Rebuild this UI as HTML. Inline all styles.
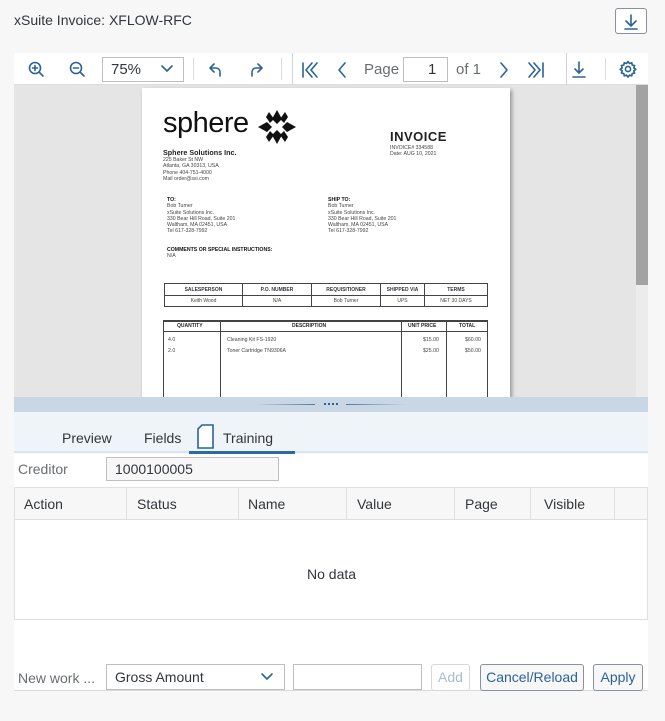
<!DOCTYPE html>
<html><head><meta charset="utf-8">
<style>
*{box-sizing:border-box;margin:0;padding:0}
body{width:665px;height:721px;background:#f7f7f7;font-family:"Liberation Sans",sans-serif;color:#32363a;position:relative;overflow:hidden}
.a{position:absolute}
.t{font-size:14px}
.ic{position:absolute;stroke:#2b6397;fill:none;stroke-width:1.6;stroke-linecap:round;stroke-linejoin:round}
.pg{font-family:"Liberation Sans",sans-serif;color:#222;position:absolute;white-space:nowrap}
.btn{position:absolute;border:1px solid #89919a;border-radius:3px;background:#f7f7f7;color:#2b6397;font-size:14px;text-align:center;line-height:25px;height:27px}
table.inv{border-collapse:collapse;position:absolute;font-size:5px}
table.inv td{border:1px solid #444;text-align:center;padding:0}
.sm{font-size:5.2px;line-height:6.3px;color:#444}
</style></head><body>
<div class="a t" style="left:14px;top:12px;color:#32363a">xSuite Invoice: XFLOW-RFC</div>
<div class="a" style="left:615px;top:8px;width:32px;height:26px;border:1px solid #89919a;border-radius:3px;background:#fff"></div>
<svg class="ic" style="left:615px;top:8px" width="32" height="26"><path d="M16 7v11M11 13l5 5 5-5M10 21h12"/></svg>

<!-- toolbar -->
<div class="a" style="left:14px;top:53px;width:634px;height:32px;background:#fff;border-bottom:1px solid #ddd"></div>
<svg class="ic" style="left:27px;top:60px" width="20" height="20" stroke-width="1.3"><circle cx="8" cy="8" r="5.5"/><path d="M12 12l4 4M5.5 8h5M8 5.5v5"/></svg>
<svg class="ic" style="left:68px;top:60px" width="20" height="20" stroke-width="1.3"><circle cx="8" cy="8" r="5.5"/><path d="M12 12l4 4M5.5 8h5"/></svg>
<div class="a" style="left:102px;top:57px;width:82px;height:25px;border:1px solid #bfbfbf"></div>
<div class="a t" style="left:111px;top:61px;font-size:15px">75%</div>
<svg class="ic" style="left:160px;top:64px" width="14" height="10" stroke-width="1"><path d="M2 2l5 5 5-5"/></svg>
<div class="a" style="left:193px;top:58px;width:1px;height:22px;background:#ddd"></div>
<svg class="ic" style="left:206px;top:60px" width="20" height="20" stroke-width="2"><path d="M8 4L4 8l4 4M4 8h6a4 4 0 0 1 4 4v4"/></svg>
<svg class="ic" style="left:246px;top:60px" width="20" height="20" stroke-width="2"><path d="M12 4l4 4-4 4M16 8h-6a4 4 0 0 0-4 4v4"/></svg>
<div class="a" style="left:281px;top:58px;width:1px;height:22px;background:#ddd"></div>
<div class="a" style="left:292px;top:53px;width:1px;height:32px;background:#c8d4e0"></div>
<svg class="ic" style="left:300px;top:60px" width="20" height="20" stroke-width="2"><path d="M3 3v14M12 3l-6 7 6 7M17 3l-6 7 6 7"/></svg>
<svg class="ic" style="left:335px;top:60px" width="14" height="20" stroke-width="2"><path d="M10 3l-6 7 6 7"/></svg>
<div class="a t" style="left:364px;top:61px;color:#6a6d70;font-size:15px">Page</div>
<div class="a" style="left:403px;top:57px;width:45px;height:25px;border:1px solid #bfbfbf;background:#fff"></div>
<div class="a t" style="left:428px;top:61px;font-size:15px">1</div>
<div class="a t" style="left:456px;top:61px;color:#6a6d70;font-size:15px">of 1</div>
<svg class="ic" style="left:497px;top:60px" width="14" height="20" stroke-width="2"><path d="M4 3l6 7-6 7"/></svg>
<svg class="ic" style="left:526px;top:60px" width="20" height="20" stroke-width="2"><path d="M3 3l6 7-6 7M8 3l6 7-6 7M17 3v14"/></svg>
<div class="a" style="left:566px;top:53px;width:1px;height:32px;background:#c8d4e0"></div>
<svg class="ic" style="left:569px;top:58px" width="20" height="22" stroke-width="1.3"><path d="M10 4v11M6 11l4 4 4-4M4 19h12"/></svg>
<div class="a" style="left:605px;top:58px;width:1px;height:22px;background:#ddd"></div>
<svg class="ic" style="left:618px;top:58px" width="20" height="22" stroke-width="1.2"><circle cx="10" cy="11" r="2.6"/><path d="M10 3.5l1.5 2 2.3-.8.4 2.4 2.4.4-.8 2.3 2 1.5-2 1.5.8 2.3-2.4.4-.4 2.4-2.3-.8-1.5 2-1.5-2-2.3.8-.4-2.4-2.4-.4.8-2.3-2-1.5 2-1.5-.8-2.3 2.4-.4.4-2.4 2.3.8z"/></svg>

<!-- viewer -->
<div class="a" style="left:14px;top:85px;width:634px;height:312px;background:#e5e5e5"></div>
<div class="a" style="left:636px;top:85px;width:12px;height:312px;background:#ececec"></div>
<div class="a" style="left:636px;top:85px;width:12px;height:200px;background:#a3a3a3"></div>
<div class="a" style="left:142px;top:88px;width:368px;height:309px;background:#fff;box-shadow:2px 2px 4px rgba(0,0,0,.35)"></div>

<div class="pg" style="left:163px;top:107px;font-size:29px;font-weight:300;letter-spacing:-.5px;color:#111">sphere</div>
<svg class="a" style="left:258px;top:110px" width="38" height="34"><g fill="#111"><path d="M19 0l5 9-5 5-5-5zM19 34l5-9-5-5-5 5zM0 17l9-5 5 5-5 5zM38 17l-9-5-5 5 5 5z"/><path d="M11 2l5 7-4 4-4-6zM27 2l-5 7 4 4 4-6zM11 32l5-7-4-4-4 6zM27 32l-5-7 4-4 4 6z"/></g></svg>
<div class="pg" style="left:163px;top:148px;font-size:7.2px;font-weight:bold">Sphere Solutions Inc.</div>
<div class="pg sm" style="left:163px;top:157px">225 Baker St NW<br>Atlanta, GA 30313, USA<br>Phone 404-751-4000<br>Mail order@ssi.com</div>
<div class="pg" style="left:390px;top:129px;font-size:13px;font-weight:bold;letter-spacing:.5px">INVOICE</div>
<div class="pg sm" style="left:390px;top:145px">INVOICE# 334588<br>Date: AUG 10, 2021</div>
<div class="pg sm" style="left:167px;top:197px"><b style="color:#111">TO:</b><br>Bob Turner<br>xSuite Solutions Inc.<br>330 Bear Hill Road, Suite 201<br>Waltham, MA 02451, USA<br>Tel 617-328-7992</div>
<div class="pg sm" style="left:328px;top:197px"><b style="color:#111">SHIP TO:</b><br>Bob Turner<br>xSuite Solutions Inc.<br>330 Bear Hill Road, Suite 201<br>Waltham, MA 02451, USA<br>Tel 617-328-7992</div>
<div class="pg sm" style="left:167px;top:247px"><b style="color:#111">COMMENTS OR SPECIAL INSTRUCTIONS:</b><br>N/A</div>
<table class="inv" style="left:164px;top:283px;width:324px">
<tr style="height:12px;font-weight:bold"><td style="width:78px">SALESPERSON</td><td style="width:69px">P.O. NUMBER</td><td style="width:69px">REQUISITIONER</td><td style="width:44px">SHIPPED VIA</td><td>TERMS</td></tr>
<tr style="height:11px;color:#444"><td>Keith Wood</td><td>N/A</td><td>Bob Turner</td><td>UPS</td><td>NET 30 DAYS</td></tr></table>
<div class="a" style="left:163px;top:320px;width:325px;height:80px;border:1px solid #444;border-top:2px solid #444"></div>
<div class="a" style="left:163px;top:331px;width:325px;height:1px;background:#444"></div>
<div class="a" style="left:220px;top:320px;width:1px;height:80px;background:#444"></div>
<div class="a" style="left:401px;top:320px;width:1px;height:80px;background:#444"></div>
<div class="a" style="left:446px;top:320px;width:1px;height:80px;background:#444"></div>
<div class="pg" style="left:177px;top:323px;font-size:5px;font-weight:bold">QUANTITY</div>
<div class="pg" style="left:292px;top:323px;font-size:5px;font-weight:bold">DESCRIPTION</div>
<div class="pg" style="left:408px;top:323px;font-size:5px;font-weight:bold">UNIT PRICE</div>
<div class="pg" style="left:459px;top:323px;font-size:5px;font-weight:bold">TOTAL</div>
<div class="pg sm" style="left:168px;top:335px;line-height:11px">4.0<br>2.0</div>
<div class="pg sm" style="left:227px;top:335px;line-height:11px">Cleaning Kit FS-1920<br>Toner Cartridge TN9306A</div>
<div class="pg sm" style="left:423px;top:335px;line-height:11px">$15.00<br>$25.00</div>
<div class="pg sm" style="left:465px;top:335px;line-height:11px">$60.00<br>$50.00</div>

<!-- splitter -->
<div class="a" style="left:14px;top:397px;width:634px;height:15px;background:#c9d7e5"></div>
<div class="a" style="left:255px;top:404px;width:60px;height:1px;background:linear-gradient(90deg,transparent,#4a7aab)"></div>
<div class="a" style="left:346px;top:404px;width:60px;height:1px;background:linear-gradient(90deg,#4a7aab,transparent)"></div>
<div class="a" style="left:324px;top:403px;width:14px;height:2px;border-top:2px dotted #2b6397"></div>

<!-- tabs -->
<div class="a" style="left:14px;top:412px;width:634px;height:41px;background:#eff4f9;border-bottom:2px solid #d9e5f0"></div>
<div class="a t" style="left:62px;top:430px">Preview</div>
<div class="a t" style="left:144px;top:430px">Fields</div>
<svg class="a" style="left:196px;top:424px" width="20" height="26"><path d="M6 1h11v23H2V5z" fill="#fff" stroke="#2b6397" stroke-width="1.6"/></svg>
<div class="a t" style="left:223px;top:430px">Training</div>
<div class="a" style="left:189px;top:451px;width:106px;height:3px;background:#2f6a9f"></div>

<!-- creditor -->
<div class="a" style="left:14px;top:454px;width:634px;height:33px;background:#fff"></div>
<div class="a t" style="left:18px;top:461px;color:#6a6d70">Creditor</div>
<div class="a" style="left:106px;top:457px;width:173px;height:24px;border:1px solid #bfbfbf;background:#f7f7f7"></div>
<div class="a t" style="left:115px;top:461px">1000100005</div>

<!-- table -->
<div class="a" style="left:14px;top:487px;width:634px;height:133px;border:1px solid #e0e0e0;background:#fff"></div>
<div class="a" style="left:14px;top:487px;width:634px;height:33px;background:#f7f7f7;border:1px solid #e0e0e0"></div>
<div class="a" style="left:126px;top:487px;width:1px;height:33px;background:#e0e0e0"></div>
<div class="a" style="left:238px;top:487px;width:1px;height:33px;background:#e0e0e0"></div>
<div class="a" style="left:346px;top:487px;width:1px;height:33px;background:#e0e0e0"></div>
<div class="a" style="left:454px;top:487px;width:1px;height:33px;background:#e0e0e0"></div>
<div class="a" style="left:530px;top:487px;width:1px;height:33px;background:#e0e0e0"></div>
<div class="a" style="left:614px;top:487px;width:1px;height:33px;background:#e0e0e0"></div>
<div class="a t" style="left:24px;top:496px">Action</div>
<div class="a t" style="left:137px;top:496px">Status</div>
<div class="a t" style="left:248px;top:496px">Name</div>
<div class="a t" style="left:357px;top:496px">Value</div>
<div class="a t" style="left:465px;top:496px">Page</div>
<div class="a t" style="left:544px;top:496px">Visible</div>
<div class="a t" style="left:307px;top:566px">No data</div>

<!-- footer -->
<div class="a" style="left:14px;top:620px;width:634px;height:71px;background:#fff;border-bottom:1px solid #d9d9d9"></div>
<div class="a t" style="left:18px;top:670px;color:#6a6d70">New work ...</div>
<div class="a" style="left:106px;top:664px;width:179px;height:26px;border:1px solid #bfbfbf;background:#fff"></div>
<div class="a t" style="left:115px;top:669px">Gross Amount</div>
<svg class="ic" style="left:260px;top:672px" width="14" height="10" stroke-width="1"><path d="M2 2l5 5 5-5"/></svg>
<div class="a" style="left:293px;top:664px;width:129px;height:26px;border:1px solid #bfbfbf;background:#fff"></div>
<div class="btn" style="left:431px;top:664px;width:39px;border-color:#d5d9dc;color:#a9bccf;background:#fff">Add</div>
<div class="btn" style="left:480px;top:664px;width:104px">Cancel/Reload</div>
<div class="btn" style="left:593px;top:664px;width:50px">Apply</div>
</body></html>
